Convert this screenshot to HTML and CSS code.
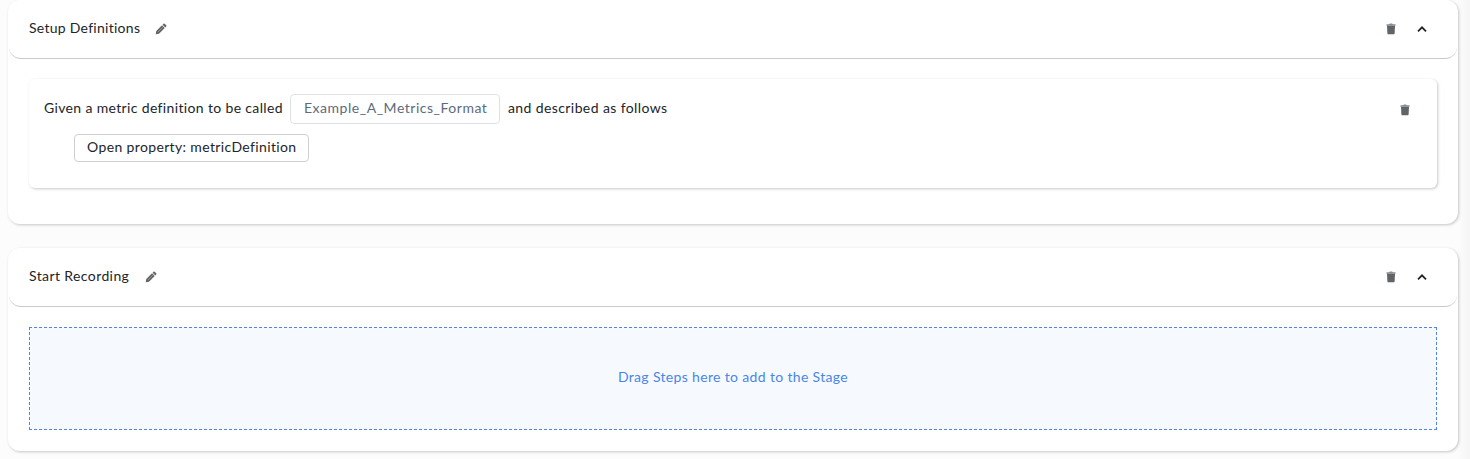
FILE: index.html
```html
<!DOCTYPE html>
<html lang="en">
<head>
<meta charset="utf-8">
<title>Stages</title>
<link rel="stylesheet" href="styles.css">
</head>
<body>
<svg class="sprite" aria-hidden="true">
  <symbol id="pencil" viewBox="0 0 12 12"><path d="M.7 11.300l.6-3.300 5.700-5.700 2.700 2.700L4 10.700zM7.600 1.700l.9-.9q.6-.5 1.200 0l1.500 1.500q.5.6 0 1.200l-.9.9z"/><path d="M3 9l4.700-4.700" stroke="#aaa69f" stroke-width=".7"/></symbol>
  <symbol id="trash" viewBox="0 0 10 12"><path d="M.5 1.200h2.700l.7-.7h2.200l.7.7h2.700v1.500h-9z" opacity=".75"/><path d="M1 2.700h8l-.4 7.800q-.1.700-.8.700H2.200q-.7 0-.8-.7z"/></symbol>
  <symbol id="chevron" viewBox="0 0 10 8"><path d="M1 6.300l4-4 4 4" fill="none" stroke="currentColor" stroke-width="1.700"/></symbol>
</svg>
<main class="stages">
  <section class="stage stage-first">
    <header class="stage-header">
      <h2 class="stage-title title-setup">Setup Definitions</h2>
      <svg class="icon-pencil"><use href="#pencil"/></svg>
      <div class="stage-actions">
        <svg class="icon-trash"><use href="#trash"/></svg>
        <svg class="icon-chevron"><use href="#chevron"/></svg>
      </div>
    </header>
    <div class="stage-body">
      <article class="step">
        <div class="step-content">
          <div class="step-line">
            <span class="text-before">Given a metric definition to be called</span>
            <span class="field">Example_A_Metrics_Format</span>
            <span class="text-after">and described as follows</span>
          </div>
          <button class="property" type="button">Open property: metricDefinition</button>
        </div>
        <svg class="icon-trash step-trash"><use href="#trash"/></svg>
      </article>
    </div>
  </section>
  <section class="stage stage-second">
    <header class="stage-header">
      <h2 class="stage-title title-recording">Start Recording</h2>
      <svg class="icon-pencil"><use href="#pencil"/></svg>
      <div class="stage-actions">
        <svg class="icon-trash"><use href="#trash"/></svg>
        <svg class="icon-chevron"><use href="#chevron"/></svg>
      </div>
    </header>
    <div class="stage-body">
      <div class="dropzone"><span class="drop-text">Drag Steps here to add to the Stage</span></div>
    </div>
  </section>
</main>
</body>
</html>
```
FILE: styles.css
```css
* { box-sizing: border-box; }
body {
  margin: 0;
  height: 459px;
  overflow: hidden;
  background: linear-gradient(to right, #fcfcfc calc(100% - 12px), #f5f5f5);
  color: #212529;
  font: 14px/20px Lato, "Noto Sans", sans-serif;
}
.sprite { display: none; }
.stages {
  display: flex;
  flex-direction: column;
  gap: 24px;
  padding: 0 12px 0 8px;
}
.stage {
  border-radius: 12px;
  background: #fff;
  box-shadow: 1px 1px 3px rgba(0, 0, 0, .22);
}
.stage-first { height: 224px; }
.stage-second { height: 203px; }
.stage-header {
  display: flex;
  align-items: center;
  height: 59px;
  margin: 0 1px;
  padding: 0 30px 2px 20px;
  border-bottom: 1px solid #c6c8d2;
  border-radius: 12px;
}
.stage-title { margin: 0; font-size: 14px; font-weight: 400; white-space: nowrap; }
.title-setup { width: 111px; letter-spacing: .27px; }
.title-recording { width: 101px; letter-spacing: .4px; }
.icon-pencil { width: 12px; height: 12px; margin-left: 15px; margin-top: 2px; fill: #656565; }
.stage-actions { display: flex; align-items: center; gap: 21px; margin-left: auto; margin-top: 2px; }
.icon-trash { width: 10px; height: 12px; fill: #606368; }
.icon-chevron { width: 10px; height: 8px; color: #202124; }
.stage-body { padding: 20px 21px 0; }
.step {
  display: flex;
  justify-content: space-between;
  height: 109px;
  padding: 15px 27px 0 15px;
  border-radius: 6px;
  background: #fff;
  box-shadow: 1px 1px 3px rgba(0, 0, 0, .22);
}
.step-line { display: flex; align-items: center; height: 30px; white-space: nowrap; }
.text-before { width: 239px; padding-bottom: 2px; letter-spacing: .35px; }
.field {
  width: 210px;
  height: 30px;
  margin: 0 8px 0 7px;
  padding: 3px 12px 5px 13px;
  border: 1px solid #dee2e6;
  border-radius: 4px;
  color: #5c6b7d;
  letter-spacing: .52px;
}
.text-after { padding-bottom: 2px; letter-spacing: .4px; }
.property {
  display: block;
  width: 235px;
  height: 28px;
  margin: 10px 0 0 30px;
  padding: 0 12px 2px;
  border: 1px solid #ced0d3;
  border-radius: 4px;
  background: #fff;
  color: #212529;
  font: inherit;
  text-align: left;
  white-space: nowrap;
  letter-spacing: .36px;
}
.step-trash { margin-top: 10px; }
.dropzone {
  display: flex;
  align-items: center;
  justify-content: center;
  height: 103px;
  border: 1px dashed #5086df;
  background: #f6faff;
  color: #4a86e8;
}
.drop-text { padding-bottom: 4px; letter-spacing: .34px; }
```
